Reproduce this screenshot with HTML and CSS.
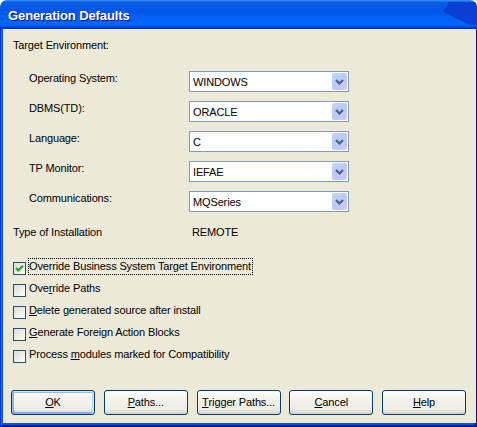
FILE: index.html
```html
<!DOCTYPE html>
<html>
<head>
<meta charset="utf-8">
<link rel="stylesheet" href="styles.css">
</head>
<body>
<div class="window">
  <div class="titlebar">
    <span class="title">Generation Defaults</span>
    <svg class="wedge" width="34" height="26" viewBox="0 0 34 26"><polygon points="6,2 34,2 34,25 27,25 0,12" fill="#0a3fd4"/></svg>
  </div>
  <div class="frame">
    <div class="content">
      <div class="section-label">Target Environment:</div>
      <div class="fields">
        <div class="field"><span class="label">Operating System:</span><div class="combo"><span class="value">WINDOWS</span><span class="drop"><svg width="15" height="17" viewBox="0 0 15 17"><polyline points="4,7 7.5,10.5 11,7" fill="none" stroke="#4d6185" stroke-width="2.2"/></svg></span></div></div>
        <div class="field"><span class="label">DBMS(TD):</span><div class="combo"><span class="value">ORACLE</span><span class="drop"><svg width="15" height="17" viewBox="0 0 15 17"><polyline points="4,7 7.5,10.5 11,7" fill="none" stroke="#4d6185" stroke-width="2.2"/></svg></span></div></div>
        <div class="field"><span class="label">Language:</span><div class="combo"><span class="value">C</span><span class="drop"><svg width="15" height="17" viewBox="0 0 15 17"><polyline points="4,7 7.5,10.5 11,7" fill="none" stroke="#4d6185" stroke-width="2.2"/></svg></span></div></div>
        <div class="field"><span class="label">TP Monitor:</span><div class="combo"><span class="value">IEFAE</span><span class="drop"><svg width="15" height="17" viewBox="0 0 15 17"><polyline points="4,7 7.5,10.5 11,7" fill="none" stroke="#4d6185" stroke-width="2.2"/></svg></span></div></div>
        <div class="field"><span class="label">Communications:</span><div class="combo"><span class="value">MQSeries</span><span class="drop"><svg width="15" height="17" viewBox="0 0 15 17"><polyline points="4,7 7.5,10.5 11,7" fill="none" stroke="#4d6185" stroke-width="2.2"/></svg></span></div></div>
      </div>
      <div class="install"><span class="install-label">Type of Installation</span><span>REMOTE</span></div>
      <div class="checks">
        <div class="check"><span class="box"><svg width="11" height="11" viewBox="0 0 11 11"><polyline points="2,5 4.3,7.5 9,2.8" fill="none" stroke="#21a121" stroke-width="2.2"/></svg></span><span class="text focus">Override Business System Target Environment</span></div>
        <div class="check"><span class="box"></span><span class="text">Ove<u>r</u>ride Paths</span></div>
        <div class="check"><span class="box"></span><span class="text"><u>D</u>elete generated source after install</span></div>
        <div class="check"><span class="box"></span><span class="text"><u>G</u>enerate Foreign Action Blocks</span></div>
        <div class="check"><span class="box"></span><span class="text">Process <u>m</u>odules marked for Compatibility</span></div>
      </div>
      <div class="buttons">
        <div class="btn default"><u>O</u>K</div>
        <div class="btn"><u>P</u>aths...</div>
        <div class="btn"><u>T</u>rigger Paths...</div>
        <div class="btn"><u>C</u>ancel</div>
        <div class="btn"><u>H</u>elp</div>
      </div>
    </div>
  </div>
</div>
</body>
</html>
```

FILE: styles.css
```css
html, body {
  margin: 0;
  padding: 0;
  background: #ffffff;
}
body {
  font-family: "Liberation Sans", Arial, sans-serif;
  font-size: 11px;
  color: #000;
}
u { text-decoration: underline; text-underline-offset: 1px; }
.window {
  width: 477px;
  height: 427px;
  display: flex;
  flex-direction: column;
}
.titlebar {
  position: relative;
  height: 29px;
  box-sizing: border-box;
  padding: 8px 0 0 8px;
  border-radius: 7px 7px 0 0;
  background: linear-gradient(180deg, #3d8ff5 0, #0a5fe2 8%, #0055e8 35%, #0064fb 70%, #0066ff 86%, #005bf0 90%, #003dd7 94%, #0030c8 100%);
  overflow: hidden;
}
.title {
  position: relative;
  z-index: 1;
  color: #fff;
  font-family: "Liberation Sans", Arial, sans-serif;
  font-weight: bold;
  font-size: 13px;
  line-height: 15px;
  letter-spacing: -0.1px;
  text-shadow: 1px 1px #0f1089;
}
.wedge {
  position: absolute;
  right: 0;
  top: 0;
}
.frame {
  flex: 1;
  display: flex;
  padding: 0 3px 4px 3px;
  background: #0054e3;
  box-shadow: inset 1px 0 #0831d9, inset -1px 0 #00138c, inset 0 -1px #00138c, inset 2px 0 #166aee, inset -2px 0 #001ea0, inset 0 -2px #001ea0;
}
.content {
  flex: 1;
  display: flex;
  flex-direction: column;
  background: #ece9d8;
  padding: 0 10px 8px 10px;
  line-height: 13px;
  letter-spacing: -0.14px;
}
.section-label {
  margin-top: 10px;
  height: 13px;
}
.fields {
  margin-top: 19px;
  display: flex;
  flex-direction: column;
  gap: 9px;
}
.field {
  display: flex;
  height: 21px;
  padding-left: 16px;
}
.label {
  width: 160px;
  padding-top: 1px;
}
.combo {
  width: 160px;
  height: 21px;
  box-sizing: border-box;
  border: 1px solid #7f9db9;
  background: #fff;
  display: flex;
  align-items: center;
  justify-content: space-between;
}
.value {
  padding-left: 3px;
  padding-top: 1px;
}
.drop {
  width: 15px;
  height: 17px;
  margin-right: 1px;
  box-sizing: border-box;
  border-radius: 2px;
  background: linear-gradient(135deg, #c7d6fb 0, #b8cbf7 45%, #c9c6f7 80%, #d8d0fa 100%);
  display: flex;
}
.drop svg { display: block; }
.install {
  margin-top: 14px;
  display: flex;
  height: 13px;
}
.install-label {
  width: 179px;
}
.checks {
  margin-top: 23px;
  display: flex;
  flex-direction: column;
  gap: 9px;
}
.check {
  display: flex;
  align-items: flex-start;
  height: 13px;
}
.box {
  width: 13px;
  height: 13px;
  box-sizing: border-box;
  border: 1px solid #1c5180;
  background: linear-gradient(135deg, #dcdcd7 0, #f0f0ea 60%, #ffffff 100%);
  display: flex;
  flex: none;
}
.box svg { display: block; }
.text {
  margin-left: 2px;
  margin-top: -4px;
  border: 1px solid transparent;
  padding: 1px 1px 1px 0;
  white-space: nowrap;
}
.text.focus {
  border: 1px dotted #000;
}
.buttons {
  margin-top: auto;
  margin-left: -2px;
  display: flex;
  gap: 8.75px;
}
.btn {
  width: 84px;
  height: 25px;
  box-sizing: border-box;
  border: 1px solid #003c74;
  border-radius: 3px;
  background: linear-gradient(180deg, #ffffff 0, #f4f3ee 30%, #ecebe6 80%, #d6d0c5 100%);
  display: flex;
  align-items: center;
  justify-content: center;
  white-space: nowrap;
}
.btn.default {
  box-shadow: inset -1px 1px #cee7ff, inset 1px 2px #98b8ea, inset -2px 0 #bcd4f6, inset 1px -1px #89ade4, inset 2px -2px #89ade4;
}
```
